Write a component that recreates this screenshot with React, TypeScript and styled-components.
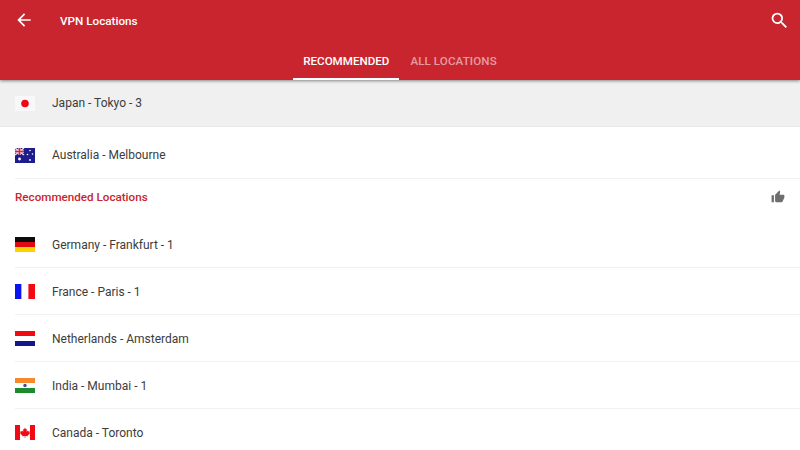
import * as React from 'react';
import styled, { createGlobalStyle } from 'styled-components';

const GlobalStyle = createGlobalStyle`
    html, body {
        margin: 0;
        padding: 0;
        background: #fff;
        font-family: Roboto, "Liberation Sans", sans-serif;
    }
`;

const JapanFlag = () => (
    <FlagSvg viewBox="0 0 20 15">
        <rect width="20" height="15" fill="#f8f8f8" />
        <circle cx="10" cy="7.5" r="3.8" fill="#ee0a14" />
    </FlagSvg>
);

const AustraliaFlag = () => (
    <FlagSvg viewBox="0 0 20 15">
        <rect width="20" height="15" fill="#1c1c8c" />
        <path d="M0 0L9 7M9 0L0 7" stroke="#f2dfe4" strokeWidth="1.4" />
        <path d="M4.5 0V7M0 3.5H9" stroke="#f2dfe4" strokeWidth="2.4" />
        <path d="M4.5 0V7M0 3.5H9" stroke="#e0203c" strokeWidth="1.4" />
        <circle cx="4.5" cy="11" r="1.4" fill="#fff" />
        <circle cx="15" cy="2.5" r=".8" fill="#fff" />
        <circle cx="12.5" cy="6.5" r=".8" fill="#fff" />
        <circle cx="17.5" cy="6" r=".8" fill="#fff" />
        <circle cx="15" cy="12" r=".9" fill="#fff" />
    </FlagSvg>
);

const GermanyFlag = () => (
    <FlagSvg viewBox="0 0 20 15">
        <rect width="20" height="5" fill="#0c0c0c" />
        <rect y="5" width="20" height="5" fill="#e00a10" />
        <rect y="10" width="20" height="5" fill="#fcd200" />
    </FlagSvg>
);

const FranceFlag = () => (
    <FlagSvg viewBox="0 0 20 15">
        <rect width="6.6" height="15" fill="#0a14f0" />
        <rect x="6.6" width="6.8" height="15" fill="#fff" />
        <rect x="13.4" width="6.6" height="15" fill="#f00a14" />
    </FlagSvg>
);

const NetherlandsFlag = () => (
    <FlagSvg viewBox="0 0 20 15">
        <rect width="20" height="5" fill="#f00a14" />
        <rect y="5" width="20" height="5" fill="#fff" />
        <rect y="10" width="20" height="5" fill="#14148c" />
    </FlagSvg>
);

const IndiaFlag = () => (
    <FlagSvg viewBox="0 0 20 15">
        <rect width="20" height="5" fill="#f5892c" />
        <rect y="5" width="20" height="5" fill="#fff" />
        <rect y="10" width="20" height="5" fill="#1d8a30" />
        <circle cx="10" cy="7.5" r="1.7" fill="#4a4a90" />
    </FlagSvg>
);

const CanadaFlag = () => (
    <FlagSvg viewBox="0 0 20 15">
        <rect width="20" height="15" fill="#fff" />
        <rect width="5" height="15" fill="#f00a14" />
        <rect x="15" width="5" height="15" fill="#f00a14" />
        <path d="M10 2.5L11 4.5L12 4L11.6 6.8L13 5.6L13.5 6.6L15 6.4L14.4 8.2L15 8.6L12.6 10.4L12.8 11.2L10.3 10.9V13H9.7V10.9L7.2 11.2L7.4 10.4L5 8.6L5.6 8.2L5 6.4L6.5 6.6L7 5.6L8.4 6.8L8 4L9 4.5Z" fill="#f00a14" />
    </FlagSvg>
);

const recommended = [
    { name: 'Germany - Frankfurt - 1', Flag: GermanyFlag },
    { name: 'France - Paris - 1', Flag: FranceFlag },
    { name: 'Netherlands - Amsterdam', Flag: NetherlandsFlag },
    { name: 'India - Mumbai - 1', Flag: IndiaFlag },
    { name: 'Canada - Toronto', Flag: CanadaFlag },
];

const App = () => (
    <Page>
        <GlobalStyle />
        <Header>
            <TopBar>
                <BackIcon viewBox="0 0 24 24">
                    <path d="M20 11H7.83l5.59-5.59L12 4l-8 8 8 8 1.41-1.41L7.83 13H20v-2z" />
                </BackIcon>
                <Title>VPN Locations</Title>
                <SearchIcon viewBox="0 0 24 24">
                    <path d="M15.5 14h-.79l-.28-.27A6.47 6.47 0 0 0 16 9.5 6.5 6.5 0 1 0 9.5 16c1.61 0 3.09-.59 4.23-1.57l.27.28v.79l5 4.99L20.49 19l-4.99-5zm-6 0C7.01 14 5 11.99 5 9.5S7.01 5 9.5 5 14 7.01 14 9.5 11.99 14 9.5 14z" />
                </SearchIcon>
            </TopBar>
            <Tabs>
                <Tab $active>RECOMMENDED</Tab>
                <Tab>ALL LOCATIONS</Tab>
            </Tabs>
        </Header>
        <CurrentRow>
            <JapanFlag />
            <RowLabel>Japan - Tokyo - 3</RowLabel>
        </CurrentRow>
        <RecentRow>
            <AustraliaFlag />
            <RowLabel>Australia - Melbourne</RowLabel>
        </RecentRow>
        <SectionHeading>
            <SectionTitle>Recommended Locations</SectionTitle>
            <ThumbIcon viewBox="0 0 24 24">
                <path d="M1 21h4V9H1v12zm22-11c0-1.1-.9-2-2-2h-6.31l.95-4.57.03-.32c0-.41-.17-.79-.44-1.06L14.17 1 7.59 7.59C7.22 7.95 7 8.45 7 9v10c0 1.1.9 2 2 2h9c.83 0 1.54-.5 1.84-1.22l3.02-7.05c.09-.23.14-.47.14-.73v-2z" />
            </ThumbIcon>
        </SectionHeading>
        {recommended.map(({ name, Flag }) => (
            <LocationRow key={name}>
                <Flag />
                <RowLabel>{name}</RowLabel>
            </LocationRow>
        ))}
    </Page>
);

const Page = styled.div`
    width: 800px;
    height: 450px;
    overflow: hidden;
    background: #fff;
    display: flex;
    flex-direction: column;
`;

const Header = styled.header`
    height: 80px;
    flex: none;
    background: #c9252f;
    box-shadow: 0 1px 3px rgba(0, 0, 0, 0.45);
    position: relative;
    display: flex;
    flex-direction: column;
`;

const TopBar = styled.div`
    height: 40px;
    display: flex;
    align-items: center;
    padding: 0 10px 0 14px;
`;

const BackIcon = styled.svg`
    width: 20px;
    height: 20px;
    fill: #fff;
`;

const Title = styled.h1`
    margin: 1px 0 0 26px;
    flex: 1;
    color: #fff;
    font-size: 11.7px;
    font-weight: 500;
    line-height: 40px;
`;

const SearchIcon = styled.svg`
    width: 21px;
    height: 21px;
    fill: #fff;
`;

const Tabs = styled.nav`
    height: 40px;
    display: flex;
    justify-content: center;
    gap: 1px;
`;

const Tab = styled.div<{ $active?: boolean }>`
    padding: 1px 10px 0;
    box-sizing: border-box;
    height: 40px;
    line-height: 40px;
    font-size: 11.6px;
    font-weight: 500;
    letter-spacing: ${(p) => (p.$active ? '0' : '0.1px')};
    color: ${(p) => (p.$active ? '#fff' : 'rgba(255, 255, 255, 0.55)')};
    border-bottom: 2px solid ${(p) => (p.$active ? '#fff' : 'transparent')};
`;

const FlagSvg = styled.svg`
    width: 20px;
    height: 15px;
    flex: none;
`;

const Row = styled.div`
    display: flex;
    align-items: center;
    gap: 17px;
    padding-left: 15px;
    box-sizing: border-box;
`;

const CurrentRow = styled(Row)`
    height: 47px;
    flex: none;
    background: #f0f0f0;
    border-bottom: 1px solid #e8e8e8;
`;

const RecentRow = styled(Row)`
    height: 52px;
    flex: none;
    padding-top: 4px;
    position: relative;
    &::after {
        content: '';
        position: absolute;
        left: 15px;
        right: 0;
        bottom: 0;
        height: 1px;
        background: #f1f1f1;
    }
`;

const LocationRow = styled(RecentRow)`
    height: 47px;
    padding-top: 0;
    &:last-child::after {
        display: none;
    }
`;

const RowLabel = styled.span`
    color: #3c3c3c;
    font-size: 12px;
`;

const SectionHeading = styled.div`
    height: 42px;
    flex: none;
    box-sizing: border-box;
    padding: 0 15px 6px;
    display: flex;
    align-items: center;
    justify-content: space-between;
`;

const SectionTitle = styled.h2`
    margin: 0;
    color: #c9252f;
    font-size: 11.65px;
    font-weight: 500;
`;

const ThumbIcon = styled.svg`
    width: 14px;
    height: 14px;
    fill: #6e6e6e;
`;

export default App;
